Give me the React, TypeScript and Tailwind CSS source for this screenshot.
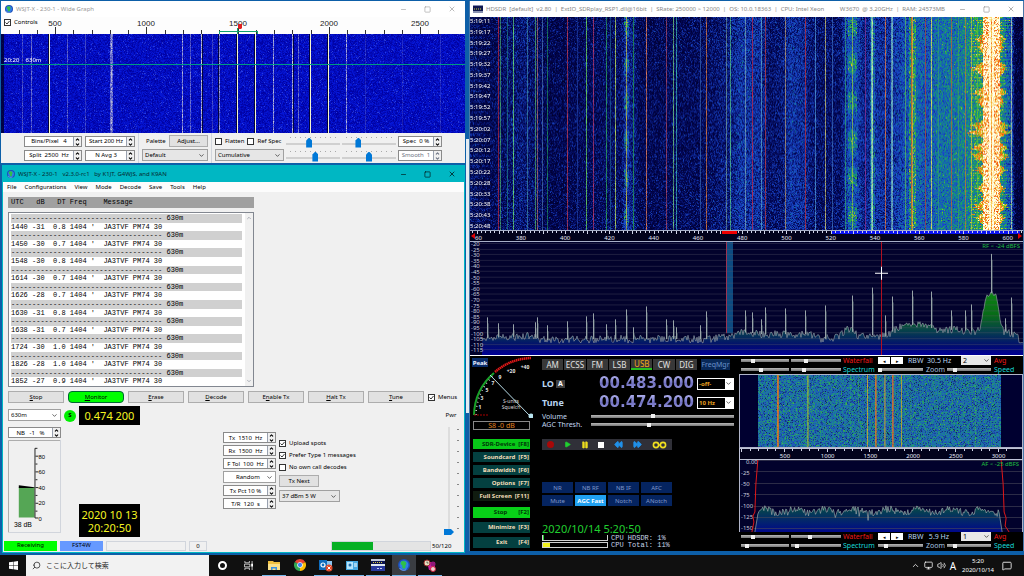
import { useEffect, useRef, type ReactNode } from 'react'
import { ChevronDown, ChevronUp, Minus, Square, X, Search, MessageSquare, Volume2, Monitor, Play, Pause, Rewind, FastForward } from 'lucide-react'

type RGB = [number, number, number]

function makeRandom(seed: number) {
  let s = seed
  return () => {
    s = (s + 0x6d2b79f5) | 0
    let t = Math.imul(s ^ (s >>> 15), 1 | s)
    t = (t + Math.imul(t ^ (t >>> 7), 61 | t)) ^ t
    return ((t ^ (t >>> 14)) >>> 0) / 4294967296
  }
}

// linear interpolation over a list of [x, y] nodes
function lerpNodes(nodes: number[][], x: number) {
  for (let i = 1; i < nodes.length; i++) {
    if (x <= nodes[i][0]) {
      const [x0, y0] = nodes[i - 1]
      const [x1, y1] = nodes[i]
      return y0 + ((y1 - y0) * (x - x0)) / (x1 - x0)
    }
  }
  return nodes[nodes.length - 1][1]
}

const mix = (a: RGB, b: RGB, t: number): RGB => [a[0] + (b[0] - a[0]) * t, a[1] + (b[1] - a[1]) * t, a[2] + (b[2] - a[2]) * t]

const PALETTE: { at: number; c: RGB }[] = [
  { at: 0, c: [0, 0, 44] },
  { at: 0.15, c: [2, 6, 84] },
  { at: 0.35, c: [26, 72, 205] },
  { at: 0.5, c: [18, 138, 140] },
  { at: 0.62, c: [50, 185, 50] },
  { at: 0.75, c: [235, 205, 30] },
  { at: 0.86, c: [240, 70, 10] },
  { at: 0.93, c: [250, 200, 70] },
  { at: 1, c: [255, 255, 235] },
]

function heat(v: number): RGB {
  const t = Math.max(0, Math.min(1, v))
  for (let i = 1; i < PALETTE.length; i++) {
    if (t <= PALETTE[i].at) {
      const a = PALETTE[i - 1]
      const b = PALETTE[i]
      return mix(a.c, b.c, (t - a.at) / (b.at - a.at))
    }
  }
  return PALETTE[PALETTE.length - 1].c
}

function Waterfall({ width, height, seed, pixel, label }: {
  width: number
  height: number
  seed: number
  pixel: (x: number, y: number, rnd: () => number) => RGB
  label: string
}) {
  const ref = useRef<HTMLCanvasElement>(null)

  useEffect(() => {
    const ctx = ref.current?.getContext('2d')
    if (!ctx) return
    const rnd = makeRandom(seed)
    const img = ctx.createImageData(width, height)
    for (let y = 0; y < height; y++) {
      for (let x = 0; x < width; x++) {
        const c = pixel(x, y, rnd)
        const i = (y * width + x) * 4
        img.data[i] = c[0]
        img.data[i + 1] = c[1]
        img.data[i + 2] = c[2]
        img.data[i + 3] = 255
      }
    }
    ctx.putImageData(img, 0, 0)
  }, [width, height, seed, pixel])

  return <canvas ref={ref} width={width} height={height} role="img" aria-label={label} className="block h-full w-full" />
}

// ---- Wide graph ----

const WIDE_LINES: Record<number, number> = {
  21: 0.3, 30: 0.4, 48: 1, 66: 0.35, 84: 0.25, 109: 0.45, 110: 0.65, 111: 0.45, 181: 0.65, 189: 0.4, 200: 0.75,
  211: 0.25, 218: 0.6, 236: 1, 254: 1, 272: 0.65, 291: 0.75, 297: 0.4, 309: 1, 327: 1, 345: 0.65, 364: 0.15, 401: 0.12, 439: 0.14,
}

function widePixel(x: number, y: number, rnd: () => number): RGB {
  const n = rnd()
  let c: RGB = mix([0, 0, 160], [6, 24, 218], n)
  if (rnd() > 0.96) c = mix(c, [90, 120, 250], 0.4)
  if (x < 3) c = mix(c, [0, 0, 40], 0.8)
  const k = WIDE_LINES[x] ?? 0
  if (k === 1) return [245, 245, 205]
  if (k > 0) return mix(c, [205, 205, 220], Math.min(1, k * (0.5 + rnd())))
  if (WIDE_LINES[x + 1] === 1 || WIDE_LINES[x + 1] === 0.6 || WIDE_LINES[x - 1] === 0.75) return mix(c, [0, 0, 20], 0.75)
  return c
}

// ---- HDSDR waterfall ----

const BAND_LEVEL = [
  [0, 0.2], [20, 0.13], [50, 0.2], [80, 0.12], [150, 0.16], [156, 0.25], [164, 0.2], [170, 0.13], [235, 0.15], [262, 0.22], [270, 0.28],
  [290, 0.26], [298, 0.17], [312, 0.19], [320, 0.28], [332, 0.25], [345, 0.17], [370, 0.17], [378, 0.33], [386, 0.32], [394, 0.21],
  [404, 0.28], [418, 0.25], [434, 0.34], [446, 0.4], [456, 0.36], [466, 0.42], [490, 0.45], [508, 0.5], [530, 0.5], [536, 0.38],
  [542, 0.28], [545, 0.08], [553, 0.06],
]

const BAND_LINES: Record<number, RGB> = {
  28: [185, 40, 60], 30: [70, 170, 110], 37: [30, 120, 130], 43: [110, 235, 120], 57: [60, 130, 160], 65: [80, 170, 100],
  67: [170, 110, 110], 72: [70, 110, 170], 77: [30, 140, 90], 97: [200, 60, 80], 107: [30, 60, 160], 116: [110, 220, 90],
  123: [190, 60, 110], 136: [50, 170, 90], 140: [30, 90, 140], 145: [190, 225, 90], 156: [200, 190, 60], 163: [40, 160, 80],
  176: [240, 130, 90], 196: [170, 70, 100], 203: [120, 210, 130], 206: [60, 180, 180], 230: [50, 90, 170], 236: [220, 120, 60],
  256: [110, 150, 150], 260: [80, 190, 140], 275: [120, 160, 180], 282: [200, 40, 70], 291: [90, 160, 200], 295: [185, 60, 70],
  315: [180, 150, 110], 335: [200, 50, 60], 345: [80, 150, 210], 355: [205, 195, 110], 362: [60, 110, 190], 375: [50, 160, 110],
  382: [150, 200, 60], 395: [140, 50, 150], 401: [130, 225, 190], 402: [200, 245, 160], 415: [235, 120, 60], 421: [110, 190, 200],
  422: [130, 200, 190], 435: [90, 180, 90], 441: [215, 90, 30], 442: [240, 180, 40], 455: [170, 70, 60], 461: [225, 225, 90],
  468: [50, 150, 120], 481: [190, 100, 50], 488: [60, 160, 90], 495: [190, 120, 50], 501: [200, 200, 60], 507: [90, 190, 60],
  541: [190, 205, 170],
}

const BURSTS = [[22, 0.7], [30, 0.5], [50, 0.9], [54, 0.5], [75, 0.8], [84, 0.6], [108, 1], [114, 1.2], [130, 0.9], [138, 1], [152, 0.7], [170, 0.5], [188, 0.9], [200, 0.6]]

function bandPixel(x: number, y: number, rnd: () => number): RGB {
  let v = lerpNodes(BAND_LEVEL, x) + (rnd() + rnd() - 1) * 0.17
  if (rnd() > 0.93) v += 0.1

  // fading carriers with ragged edges
  const fade = 1 + Math.sin(y / 6)
  if (Math.abs(x - 382) < 5) v += rnd() * 0.16 * fade
  if (Math.abs(x - 156) < 3) v += rnd() * 0.16 * fade
  if (Math.abs(x - 442) < 4) v += rnd() * 0.26
  if (Math.abs(x - 402) < 3) v += rnd() * 0.22

  // strong local station with ragged wings on both sides
  const d = Math.abs(x - 521)
  const rowNoise = (Math.imul(y + 3, 2654435761) >>> 20) / 4096
  let burst = 0
  for (const [by, power] of BURSTS) burst = Math.max(burst, power * Math.max(0, 1 - Math.abs(y - by) / 6))
  const reach = 8 + burst * (x < 521 ? 14 : 11) * (0.6 + rowNoise * 0.6)
  if (d < 3) v = 0.95 + rnd() * 0.1 - (x === 521 ? 0.08 : 0)
  else if (d < 9) v = 0.86 + rnd() * 0.24 - (rowNoise > 0.8 ? 0.06 : 0)
  else if (d < reach) v += 0.18 + rnd() * 0.26
  else if (d < 22 && rowNoise > 0.6) v += rnd() * 0.22
  if (v > 0.84) return heat(v)

  const line = BAND_LINES[x]
  if (line && d > 9) return mix(heat(v), line, 0.5 + rnd() * 0.45)
  return heat(v)
}

// ---- AF waterfall ----

const AF_LINES: Record<number, [RGB, number]> = {
  37: [[225, 125, 35], 1], 38: [[215, 110, 40], 1], 67: [[140, 180, 70], 0.9], 68: [[150, 170, 60], 0.7], 127: [[200, 165, 50], 1],
  135: [[215, 120, 45], 1], 136: [[190, 120, 50], 0.8], 144: [[150, 145, 80], 1], 145: [[130, 135, 100], 0.9], 152: [[215, 110, 50], 1],
  153: [[190, 110, 60], 0.8], 161: [[190, 165, 50], 1], 118: [[80, 180, 80], 0.4], 170: [[60, 170, 80], 0.4], 110: [[50, 170, 110], 0.4],
  235: [[80, 190, 90], 0.4],
}

function afPixel(x: number, y: number, rnd: () => number): RGB {
  if (x < 18 || x > 260) return [0, 0, 48]
  const c = heat(0.42 + (rnd() + rnd() - 1) * 0.24 - (rnd() > 0.88 ? 0.15 : 0))
  const line = AF_LINES[x]
  return line ? mix(c, line[0], line[1] * (0.7 + rnd() * 0.3)) : mix(c, [45, 130, 150], 0.3)
}

// ---- Spectrum traces ----

const RF_FLOOR = [
  [0, 99], [12, 97], [60, 95], [75, 99], [110, 98], [240, 98], [258, 95], [276, 91], [290, 93], [340, 93], [350, 98], [368, 96],
  [378, 88], [390, 96], [400, 94], [415, 95], [432, 84], [438, 86], [445, 82], [465, 88], [490, 89], [505, 90], [510, 88],
  [513, 70], [517, 53], [519, 55], [522, 50], [524, 53], [526, 53], [528, 64], [531, 84], [534, 90], [545, 95], [553, 101],
]
const RF_PEAKS = [
  [17, 76], [28, 82], [43, 83], [65, 81], [67, 76], [77, 84], [97, 80], [116, 75], [123, 72], [136, 83], [145, 78], [156, 68],
  [163, 86], [176, 65], [196, 78], [203, 79], [206, 86], [230, 84], [236, 70], [275, 69], [282, 71], [291, 78], [295, 66],
  [315, 67], [335, 69], [355, 64], [382, 54], [402, 46], [415, 74], [422, 55], [442, 49], [461, 50], [481, 69], [495, 69],
  [501, 63], [521, 12], [535, 77], [541, 56],
]

function rfTrace() {
  const rnd = makeRandom(11)
  const pts: string[] = []
  for (let x = 12; x <= 553; x++) {
    const amp = x > 510 && x < 532 ? 3 : 8
    pts.push(`${x},${(lerpNodes(RF_FLOOR, x) + (rnd() - 0.5) * amp).toFixed(1)}`)
  }
  return pts.join(' ')
}

function afTrace() {
  const rnd = makeRandom(5)
  const pts: string[] = ['15,72', '18,54']
  for (let x = 19; x <= 261; x += 1) {
    const dip = rnd() > 0.97 ? 8 : 0
    pts.push(`${x},${(51 + Math.sin(x / 5) * 2 + (rnd() - 0.5) * 7 + dip).toFixed(1)}`)
  }
  pts.push('264,72')
  return pts.join(' ')
}

const RF_TRACE = rfTrace()
const AF_TRACE = afTrace()

// ---- Shared controls ----

function Spin({ value, label, className = '', disabled = false }: { value: string; label: string; className?: string; disabled?: boolean }) {
  return (
    <div className={`flex h-[11px] items-stretch border border-[#8a8a8a] bg-white ${disabled ? 'text-gray-500' : 'text-black'} ${className}`}>
      <input aria-label={label} defaultValue={value} disabled={disabled} className="w-full min-w-0 flex-1 bg-transparent text-center leading-none outline-none" />
      <span className="flex w-2 shrink-0 flex-col border-l border-gray-400 bg-[#f0f0f0]">
        <button aria-label={`${label} up`} className="flex flex-1 items-center justify-center"><ChevronUp size={5} strokeWidth={5} /></button>
        <button aria-label={`${label} down`} className="flex flex-1 items-center justify-center"><ChevronDown size={5} strokeWidth={5} /></button>
      </span>
    </div>
  )
}

function Select({ value, label, className = '' }: { value: string; label: string; className?: string }) {
  return (
    <div className={`relative flex h-3 shrink-0 border border-[#a0a0a0] ${className}`}>
      <select aria-label={label} className="h-full w-full appearance-none bg-transparent px-0.5 leading-none outline-none">
        <option>{value}</option>
      </select>
      <ChevronDown size={7} className="pointer-events-none absolute top-0.5 right-0.5" />
    </div>
  )
}

function Check({ label, checked = false }: { label: string; checked?: boolean }) {
  return (
    <label className="flex items-center gap-[3px] whitespace-nowrap">
      <span className="relative flex size-[7px] shrink-0">
        <input type="checkbox" defaultChecked={checked} className="peer size-[7px] appearance-none border border-[#333] bg-white" />
        <svg viewBox="0 0 7 7" className="pointer-events-none absolute inset-0 hidden size-[7px] peer-checked:block">
          <path d="M1.5 3.5L3 5L5.5 2" fill="none" stroke="#222" strokeWidth="0.9" />
        </svg>
      </span>
      {label}
    </label>
  )
}

function TickSlider({ value, label }: { value: number; label: string }) {
  return (
    <div className="relative h-[13px] w-[54px]">
      <div className="absolute inset-x-1 top-0.5 h-px bg-[repeating-linear-gradient(90deg,#aaa_0_1px,transparent_1px_5px)]" />
      <input
        type="range"
        aria-label={label}
        defaultValue={value}
        className="block h-[13px] w-full appearance-none bg-[linear-gradient(#d0d0d0,#d0d0d0)] bg-[length:100%_2px] bg-[position:0_8px] bg-no-repeat [&::-webkit-slider-thumb]:mt-[3px] [&::-webkit-slider-thumb]:h-[10px] [&::-webkit-slider-thumb]:w-[6px] [&::-webkit-slider-thumb]:appearance-none [&::-webkit-slider-thumb]:bg-[#0078d7] [&::-webkit-slider-thumb]:[clip-path:polygon(50%_0,100%_30%,100%_100%,0_100%,0_30%)]"
      />
    </div>
  )
}

function DarkSlider({ value, label, className = '' }: { value: number; label: string; className?: string }) {
  return (
    <input
      type="range"
      aria-label={label}
      defaultValue={value}
      className={`block h-[5px] min-w-0 appearance-none bg-[linear-gradient(#b8b8b8,#777)] bg-[length:100%_3px] bg-center bg-no-repeat [&::-webkit-slider-thumb]:h-[4px] [&::-webkit-slider-thumb]:w-[4px] [&::-webkit-slider-thumb]:appearance-none [&::-webkit-slider-thumb]:bg-[#f0f0f0] ${className}`}
    />
  )
}

function WindowButtons({ className = '' }: { className?: string }) {
  return (
    <div className={`flex shrink-0 items-center gap-[17px] ${className}`}>
      <button aria-label="Minimize"><Minus size={7} strokeWidth={2} /></button>
      <button aria-label="Maximize"><Square size={7} strokeWidth={2} /></button>
      <button aria-label="Close"><X size={8} strokeWidth={2} /></button>
    </div>
  )
}

function Globe({ className = '' }: { className?: string }) {
  return (
    <svg viewBox="0 0 16 16" className={className}>
      <circle cx="8" cy="8" r="8" fill="#1d4fb8" />
      <circle cx="8" cy="8" r="6" fill="#2f7de8" />
      <path d="M5 3c3-1 5 0 6 2s-2 3-1 5-3 4-4 2 1-3-1-4-2-4 0-5z" fill="#2fc04a" />
      <path d="M2 12c2 3 6 4 9 2" stroke="#9ac8ff" fill="none" />
    </svg>
  )
}

function Underlined({ text, at }: { text: string; at: number }) {
  return <>{text.slice(0, at)}<u>{text[at]}</u>{text.slice(at + 1)}</>
}

// ---- WSJT-X wide graph window ----

function WideGraph() {
  const ticks = Array.from({ length: 25 }, (_, i) => 200 + i * 100)
  const xOf = (hz: number) => Math.round(54 + (hz - 500) * 0.1825)
  return (
    <section className="ml-px flex shrink-0 flex-col bg-[#f0f0f0]">
      <header className="flex h-4 items-center bg-white pr-[9px] pl-1 text-[#999]">
        <Globe className="mr-[3px] size-2" />
        <h2 className="flex-1">WSJT-X - 230-1 - Wide Graph</h2>
        <WindowButtons className="text-[#999]" />
      </header>
      <div className="relative h-[17px] bg-[#fdfdfd]">
        <svg viewBox="0 0 464 17" preserveAspectRatio="none" className="h-full w-full">
          {ticks.map(hz => (
            <rect key={hz} x={xOf(hz)} y={hz % 500 === 0 ? 10 : 13} width="1" height={hz % 500 === 0 ? 7 : 4} fill="#333" />
          ))}
          {[500, 1000, 1500, 2000, 2500].map(hz => (
            <text key={hz} x={xOf(hz)} y="9" textAnchor="middle" fontSize="8" fontFamily="Liberation Sans, sans-serif" fill="#222">{hz}</text>
          ))}
          <path d="M218 14h38v1h-38zM218 14h1v3h-1zM256 14h1v3h-1zM236 11h1v6h-1z" fill="#10a070" />
          <path d="M237 7h4v4l-1 1h-2l-1-1z" fill="#e02020" />
        </svg>
        <div className="absolute top-px left-[3px]"><Check label="Controls" checked /></div>
      </div>
      <div className="relative h-[99px]">
        <Waterfall width={464} height={99} seed={3} pixel={widePixel} label="Wide graph waterfall" />
        <div className="absolute inset-x-0 top-[30px] h-px bg-[#009a80]" />
        <span className="absolute top-[22px] left-[3px] whitespace-pre text-white">20:20    630m</span>
      </div>
      <div className="flex h-[30px] items-center pl-[23px]">
        <div className="grid grid-cols-[58px_50px] gap-x-[3px] gap-y-[3px]">
          <Spin value="Bins/Pixel   4" label="Bins per pixel" />
          <Spin value="Start 200 Hz" label="Start frequency" />
          <Spin value="Split  2500  Hz" label="Split frequency" />
          <Spin value="N Avg 3" label="Averages" />
        </div>
        <div className="mx-[3px] h-full w-px bg-gray-300" />
        <div className="flex w-[66px] flex-col gap-0.5">
          <div className="flex items-center justify-between pl-1">
            <span>Palette</span>
            <button className="h-3 w-[39px] border border-[#adadad] bg-[#e1e1e1] leading-none">Adjust...</button>
          </div>
          <Select value="Default" label="Palette" className="bg-[#e6e6e6]" />
        </div>
        <div className="mx-[3px] h-full w-px bg-gray-300" />
        <div className="flex w-[69px] flex-col gap-0.5">
          <div className="flex h-3 items-center gap-[3px]"><Check label="Flatten" /><Check label="Ref Spec" /></div>
          <Select value="Cumulative" label="Spectrum mode" className="bg-[#e6e6e6]" />
        </div>
        <div className="ml-0.5 grid grid-cols-[54px_54px] gap-x-0.5 gap-y-px">
          <TickSlider value={42} label="Gain" />
          <TickSlider value={28} label="Spectrum gain" />
          <TickSlider value={55} label="Zero" />
          <TickSlider value={50} label="Spectrum zero" />
        </div>
        <div className="ml-0.5 flex w-11 flex-col gap-[3px]">
          <Spin value="Spec  0 %" label="Spectrum share" />
          <Spin value="Smooth  1" label="Smoothing" disabled />
        </div>
      </div>
    </section>
  )
}

// ---- WSJT-X main window ----

const DECODES = [
  ['1440', '-31', '0.8'], ['1450', '-30', '0.7'], ['1548', '-30', '0.8'], ['1614', '-30', '0.7'], ['1626', '-28', '0.7'],
  ['1630', '-31', '0.8'], ['1638', '-31', '0.7'], ['1724', '-30', '1.0'], ['1826', '-28', '1.0'], ['1852', '-27', '0.9'],
]

const ACTIONS: [string, number][] = [['Stop', 0], ['Monitor', 0], ['Erase', 0], ['Decode', 0], ['Enable Tx', 1], ['Halt Tx', 0], ['Tune', 0]]

function LevelMeter() {
  return (
    <svg viewBox="0 0 53 94" className="w-full border-r border-b border-gray-300 bg-[#f0f0f0]">
      <path d="M0.500 94V0.500H53" fill="none" stroke="#aaa" />
      <rect x="11" y="48" width="16" height="31" fill="#55a655" />
      <path d="M11 46l14 2l3 1h-17z" fill="#000" />
      <path d="M30 8.500h-2.500V79.500H31M28 16.500h3M28 24.500h2M28 32.500h3M28 40.500h2M28 48.500h3M28 56.500h2M28 64.500h3M28 72.500h2" fill="none" stroke="#222" />
      {[80, 60, 40, 20, 0].map((n, i) => (
        <text key={n} x="31" y={19 + i * 15.8} fontSize="6" fontFamily="Liberation Sans, sans-serif">{n}</text>
      ))}
      <text x="6" y="89" fontSize="7" fontFamily="Liberation Sans, sans-serif">38 dB</text>
    </svg>
  )
}

function MainWindow() {
  return (
    <section className="ml-0.5 flex min-h-0 flex-1 flex-col border border-[#00b7c3] bg-[#f0f0f0]">
      <header className="flex h-4 shrink-0 items-center bg-[#00b7c3] pr-2 pl-1 text-[#062a30]">
        <Globe className="mr-[3px] size-2" />
        <h1 className="flex-1 whitespace-pre">WSJT-X - 230-1   v2.3.0-rc1   by K1JT, G4WJS, and K9AN</h1>
        <WindowButtons className="text-black" />
      </header>
      <nav className="flex h-[10px] items-center gap-2 bg-[#fcfcfc] pl-1">
        {['File', 'Configurations', 'View', 'Mode', 'Decode', 'Save', 'Tools', 'Help'].map(m => <button key={m} className="leading-none">{m}</button>)}
      </nav>

      <div className="flex min-h-0 flex-1 flex-col px-[5px] pt-[5px]">
        <div className="flex h-[11px] w-[246px] items-center bg-[#a0a0a0] pl-[3px] font-['Liberation_Mono',monospace] text-[7px] whitespace-pre">
          {'UTC   dB   DT Freq    Message'}
        </div>
        <div className="mt-1 flex h-[175px] w-[246px] shrink-0 border border-[#828790] bg-white">
          <div className="flex flex-1 flex-col overflow-hidden pt-px pl-0.5 font-['Liberation_Mono',monospace] text-[7px] leading-[8px] whitespace-pre">
            {DECODES.map(([utc, db, dt]) => (
              <div key={utc} className="flex flex-1 flex-col">
                <div className="flex-1 bg-[#d0d0d0]">{'-'.repeat(36)} 630m</div>
                <div className="flex-1">{`${utc} ${db}  ${dt} 1404 '  JA3TVF PM74 30`}</div>
              </div>
            ))}
          </div>
          <div className="ml-[3px] flex w-2 flex-col items-center justify-between bg-[#f0f0f0] py-0.5 text-gray-500">
            <ChevronUp size={6} />
            <ChevronDown size={6} />
          </div>
        </div>

        <div className="mt-1 flex h-3 items-center gap-1">
          {ACTIONS.map(([text, at]) => (
            <button
              key={text}
              className={`h-3 w-14 border leading-none ${text === 'Monitor' ? 'rounded-sm border-[#063] bg-[#00ff00]' : 'border-[#adadad] bg-[#e1e1e1]'}`}
            >
              <Underlined text={text} at={at} />
            </button>
          ))}
          <Check label="Menus" checked />
        </div>

        <div className="flex min-h-0 flex-1 pt-[3px]">
          <div className="flex w-[53px] flex-col">
            <Select value="630m" label="Band" className="mt-[3px] bg-white" />
            <Spin value="NB   -1   %" label="Noise blanker" className="mt-[6px]" />
            <div className="mt-[2px]"><LevelMeter /></div>
          </div>

          <div className="ml-1 flex w-[75px] flex-col items-end justify-between pb-[4px]">
            <div className="flex items-center gap-[3px]">
              <span className="flex size-3 items-center justify-center rounded-full bg-[#00f000] font-bold">S</span>
              <div className="flex h-[19px] w-[61px] items-center justify-center bg-black text-[11px] text-[#f5f520]">0.474 200</div>
            </div>
            <div className="flex h-[33px] w-[61px] flex-col justify-center bg-black text-center text-[11px] leading-[13px] whitespace-nowrap text-[#f5f520]">
              <span>2020 10 13</span>
              <span>20:20:50</span>
            </div>
          </div>

          <div className="ml-[83px] flex w-[53px] flex-col gap-0.5 pt-[26px]">
            <Spin value="Tx  1510  Hz" label="Tx frequency" />
            <Spin value="Rx  1500  Hz" label="Rx frequency" />
            <Spin value="F Tol  100  Hz" label="Frequency tolerance" />
            <div className="flex flex-col">
              <Select value="Random" label="Sequence" className="bg-white [&>select]:pl-3" />
            </div>
            <Spin value="Tx Pct 10 %" label="Tx percent" />
            <Spin value="T/R  120  s" label="Period" />
          </div>

          <div className="ml-[3px] flex w-[61px] flex-col gap-[3px] pt-[33px]">
            <Check label="Upload spots" checked />
            <Check label="Prefer Type 1 messages" checked />
            <Check label="No own call decodes" />
            <button className="h-3 w-10 shrink-0 border border-[#adadad] bg-[#e1e1e1] leading-none">Tx Next</button>
            <Select value="37 dBm  5 W" label="Power" className="bg-[#e6e6e6]" />
          </div>

          <div className="ml-auto flex w-4 flex-col items-center pt-[5px]">
            <span className="leading-[8px]">Pwr</span>
            <div className="relative mt-2 h-[108px] w-4">
              <div className="absolute top-0.5 right-0 bottom-0.5 w-0.5 bg-[repeating-linear-gradient(#888_0_1px,transparent_1px_11px)]" />
              <input
                type="range"
                aria-label="Pwr"
                defaultValue={0}
                className="absolute inset-0 h-full w-3 appearance-none bg-[linear-gradient(#ddd,#ddd)] bg-[length:2px_100%] bg-center bg-no-repeat [direction:rtl] [writing-mode:vertical-lr] [&::-webkit-slider-thumb]:h-[6px] [&::-webkit-slider-thumb]:w-[10px] [&::-webkit-slider-thumb]:appearance-none [&::-webkit-slider-thumb]:bg-[#0078d7] [&::-webkit-slider-thumb]:[clip-path:polygon(0_0,70%_0,100%_50%,70%_100%,0_100%)]"
              />
            </div>
          </div>
        </div>
      </div>

      <footer className="flex h-[11px] shrink-0 items-start pr-1 pl-px">
        <span className="h-[10px] w-[53px] bg-[#00ff00] text-center leading-[9px]">Receiving</span>
        <span className="ml-[3px] h-[10px] w-[43px] bg-[#6699ff] text-center leading-[9px]">FST4W</span>
        <span className="ml-[3px] h-[10px] w-20 border border-gray-300" />
        <span className="ml-[3px] h-[10px] w-[18px] border border-gray-300 text-center leading-[9px]">0</span>
        <div role="progressbar" aria-label="Period progress" aria-valuenow={50} aria-valuemax={120} className="ml-auto h-[10px] w-[100px] border border-gray-300 bg-[#e4e4e4]">
          <div className="h-full bg-[#06b025]" style={{ width: `${(50 / 120) * 100}%` }} />
        </div>
        <span className="ml-px w-[28px] leading-[10px]">50/120</span>
      </footer>
    </section>
  )
}

// ---- HDSDR window ----

const STAMPS = ['19:11', '19:17', '19:22', '19:27', '19:32', '19:37', '19:42', '19:47', '19:52', '19:57', '20:02', '20:07', '20:12', '20:17', '20:22', '20:28', '20:33', '20:38', '20:43', '20:48']

function RfScale() {
  const minor = Array.from({ length: 125 }, (_, i) => 358 + i * 2)
  return (
    <svg viewBox="0 0 553 12" preserveAspectRatio="none" className="block h-full w-full">
      <rect width="553" height="12" fill="#02021c" />
      <rect y="0" width="553" height="1" fill="#a8b0c8" />
      <rect y="11" width="553" height="1" fill="#a8b0c8" />
      <rect x="362" y="1" width="188" height="3" fill="#0a12f0" />
      {minor.map(k => (
        <rect key={k} x={Math.round((k - 357) * 2.213)} y="1" width="1" height={k % 10 === 0 ? 3 : 2} fill="#d0d4e8" />
      ))}
      <rect x="252" y="1" width="15" height="3" fill="#f00000" />
      <path d="M5 3v6L1 6z" fill="#e00000" />
      <path d="M548 3v6l4-3z" fill="#e00000" />
      {[380, 400, 420, 440, 460, 480, 500, 520, 540, 560, 580, 600].map(k => (
        <text key={k} x={(k - 357) * 2.213} y="10" textAnchor="middle" fontSize="6" fontFamily="Noto Sans, sans-serif" fill="#e8e8f8">{k}</text>
      ))}
      <text x="5" y="10" fontSize="6" fontFamily="Noto Sans, sans-serif" fill="#e8e8f8">60</text>
    </svg>
  )
}

function RfSpectrum() {
  const levels = Array.from({ length: 20 }, (_, i) => 20 + i * 5)
  return (
    <svg viewBox="0 0 553 114" preserveAspectRatio="none" className="block h-full w-full">
      <defs>
        <linearGradient id="rf" x1="0" y1="0" x2="0" y2="114" gradientUnits="userSpaceOnUse">
          <stop offset="0.45" stopColor="#0a8412" />
          <stop offset="0.65" stopColor="#086a18" />
          <stop offset="0.8" stopColor="#063c50" />
          <stop offset="0.92" stopColor="#020c70" />
          <stop offset="1" stopColor="#000096" />
        </linearGradient>
      </defs>
      <rect width="553" height="114" fill="#02022c" />
      <rect x="257" width="6" height="92" fill="#0d4a80" />
      <rect x="256" width="1" height="92" fill="#a03050" />
      <polygon points={`12,114 ${RF_TRACE} 553,114`} fill="url(#rf)" />
      {levels.map((l, i) => (
        <g key={l}>
          <rect x="10" y={Math.round(i * 5.65) + 1} width="543" height="1" fill="#5a5a6a" opacity="0.35" />
          <text x="1" y={i * 5.65 + 4} fontSize="6" fontFamily="Noto Sans, sans-serif" fill="#c8ccdc">-{l}</text>
        </g>
      ))}
      <polyline points={RF_TRACE} fill="none" stroke="#a0aab0" strokeWidth="0.600" />
      {RF_PEAKS.map(([x, y]) => (
        <g key={x}>
          <rect x={x} y={y} width="1" height={Math.max(0, lerpNodes(RF_FLOOR, x) - y)} fill="#98a4a8" />
          <rect x={x + 1} y={y + 6} width="1" height={Math.max(0, lerpNodes(RF_FLOOR, x) - y - 6)} fill="#50606c" opacity="0.600" />
        </g>
      ))}
      <rect x="411" width="1" height="114" fill="#b01020" />
      <path d="M405 31h13v1h-13zM411 25h1v13h-1z" fill="#fff" />
      <text x="550" y="6" textAnchor="end" fontSize="6" fontFamily="Noto Sans, sans-serif" fill="#20c040">RF &lt; -24 dBFS</text>
    </svg>
  )
}

function SMeter() {
  const marks: [string, number, number][] = [['1', 10, 51], ['3', 12, 42], ['5', 17, 34], ['7', 23, 27], ['9', 30, 21], ['+20', 41, 15], ['+40', 55, 11]]
  return (
    <svg viewBox="0 0 63 62" className="h-[62px] w-[63px]">
      <path d="M4 59A57 57 0 0 1 24 17" fill="none" stroke="#18a028" strokeWidth="2" />
      <path d="M25 16A57 57 0 0 1 61 2" fill="none" stroke="#e01818" strokeWidth="2.500" strokeDasharray="1.500 0.500" />
      <path d="M6 59A55 55 0 0 1 24 19" fill="none" stroke="#fff" strokeWidth="1.500" strokeDasharray="0.700 3.500" />
      <path d="M4 59h14" stroke="#a00" strokeDasharray="2 1" />
      <rect x="2" y="2" width="16" height="9" fill="#082a68" />
      <text x="10" y="9" textAnchor="middle" fontSize="6" fontWeight="700" fontFamily="Noto Sans, sans-serif" fill="#f0f4ff">Peak</text>
      {marks.map(([t, x, y]) => (
        <text key={t} x={x} y={y + 2} textAnchor="middle" fontSize="5" fontWeight="700" fontFamily="Noto Sans, sans-serif" fill="#e8e8e8">{t}</text>
      ))}
      <text x="41" y="47" textAnchor="middle" fontSize="5" fontFamily="Noto Sans, sans-serif" fill="#ddd">S-units</text>
      <text x="41" y="53" textAnchor="middle" fontSize="5" fontFamily="Noto Sans, sans-serif" fill="#ddd">Squelch</text>
      <path d="M20 19L60 60" stroke="#b8dce8" />
      <circle cx="61" cy="60" r="2.500" fill="#b8e4f0" />
    </svg>
  )
}

const SIDE_BUTTONS: [string, string, string][] = [
  ['SDR-Device', '[F8]', 'bg-[#08c818] text-[#003808]'],
  ['Soundcard', '[F5]', 'bg-[#044040] text-[#f0dcb8]'],
  ['Bandwidth', '[F6]', 'bg-[#044040] text-[#f0dcb8]'],
  ['Options', '[F7]', 'bg-[#044040] text-[#f0dcb8]'],
  ['Full Screen', '[F11]', 'bg-[#101c10] text-[#f0dcb8]'],
]
const SIDE_BUTTONS_2: [string, string, string][] = [
  ['Stop', '[F2]', 'bg-[#08d018] text-[#003808]'],
  ['Minimize', '[F3]', 'bg-[#044040] text-[#f0dcb8]'],
  ['Exit', '[F4]', 'bg-[#044040] text-[#f0dcb8]'],
]

function SidePanel() {
  return (
    <div className="flex w-[63px] shrink-0 flex-col">
      <SMeter />
      <div className="mt-[3px] ml-[3px] h-[9px] w-[57px] border border-[#888] text-center text-[7px] leading-[7px] text-[#e08020]">S8 -0 dB</div>
      <div className="mt-[9px] ml-[3px] flex w-[57px] flex-col gap-[3px] font-bold">
        {SIDE_BUTTONS.map(([name, key, tone]) => (
          <button key={name} className={`flex h-[10px] items-center justify-end gap-[3px] pr-px ${tone}`}><span>{name}</span><span>{key}</span></button>
        ))}
      </div>
      <div className="mt-[6px] ml-[3px] flex w-[57px] flex-col gap-[4px] font-bold">
        {SIDE_BUTTONS_2.map(([name, key, tone]) => (
          <button key={name} className={`flex h-[11px] items-center justify-end gap-[3px] pr-px ${tone}`}>
            <span className={name === 'Minimize' ? '' : 'pr-2'}>{name}</span><span>{key}</span>
          </button>
        ))}
      </div>
    </div>
  )
}

function FreqRow({ label, value, step, badge }: { label: string; value: string; step: string; badge?: ReactNode }) {
  return (
    <div className="flex h-[19px] items-center">
      <span className="flex w-12 shrink-0 items-center gap-0.5 text-[9px] font-bold text-[#b8d4f0]">{label}{badge}</span>
      <span className="flex-1 bg-gradient-to-b from-[#c0c0f8] via-[#7070c0] to-[#b0b0f0] bg-clip-text text-right font-['DejaVu_Sans',sans-serif] text-[15px] leading-[19px] font-bold text-transparent">{value}</span>
      <div className="relative ml-[3px] flex h-3 w-[37px] border border-white bg-black">
        <select aria-label={`${label} step`} className="w-full appearance-none pl-px leading-none font-bold text-[#e8a020] outline-none">
          <option>{step}</option>
        </select>
        <span className="pointer-events-none absolute inset-y-0 right-0 flex w-2 items-center bg-white text-black"><ChevronDown size={7} /></span>
      </div>
    </div>
  )
}

function TunerPanel() {
  return (
    <div className="flex w-[197px] shrink-0 flex-col pt-[3px] pl-[9px]">
      <div className="flex h-[11px] gap-px text-[8px] text-[#e0e0e0]">
        {['AM', 'ECSS', 'FM', 'LSB', 'USB', 'CW', 'DIG'].map(m => (
          <button key={m} className={`w-[22px] leading-[10px] ${m === 'USB' ? 'border-b-2 border-[#28c020] bg-[#383838] text-[#f0a818]' : 'bg-[#383838]'}`}>{m}</button>
        ))}
        <button className="ml-[3px] w-[30px] bg-[#082858] text-[7px] leading-[10px] text-[#6890c8]">FreqMgr</button>
      </div>
      <div className="mt-1 flex w-[192px] flex-col">
        <FreqRow label="LO" value="00.483.000" step="-off-" badge={<span className="bg-[#404040] px-0.5 text-[7px] leading-[8px] text-white">A</span>} />
        <FreqRow label="Tune" value="00.474.200" step="10 Hz" />
        <label className="flex h-2 items-center text-[7px] text-[#c0d8f0]"><span className="w-[49px] shrink-0">Volume</span><DarkSlider value={43} label="Volume" className="flex-1" /></label>
        <label className="flex h-[9px] items-center text-[7px] whitespace-nowrap text-[#c0d8f0]"><span className="w-[49px] shrink-0">AGC Thresh.</span><DarkSlider value={40} label="AGC threshold" className="flex-1" /></label>
      </div>
      <div className="mt-[10px] flex h-[11px] w-[130px] items-center justify-around bg-[#303038]">
        <button aria-label="Record"><span className="block size-[7px] rounded-full bg-[#a80808]" /></button>
        <button aria-label="Play"><Play size={7} fill="#20d030" color="#20d030" /></button>
        <button aria-label="Pause"><Pause size={8} fill="#f0e020" color="#f0e020" /></button>
        <button aria-label="Stop playback"><span className="block size-[6px] bg-white" /></button>
        <button aria-label="Back"><Rewind size={9} fill="#2090e8" color="#2090e8" /></button>
        <button aria-label="Forward"><FastForward size={9} fill="#2090e8" color="#2090e8" /></button>
        <button aria-label="Loop">
          <svg viewBox="0 0 15 8" className="h-2 w-[15px]" fill="none" stroke="#f0e020" strokeWidth="1.600">
            <circle cx="4" cy="4" r="2.600" />
            <circle cx="11" cy="4" r="2.600" />
            <path d="M6.500 4h2" />
          </svg>
        </button>
      </div>
      <div className="mt-[32px] grid w-[130px] grid-cols-4 gap-0.5 text-[#8098c8]">
        {['NR', 'NB RF', 'NB IF', 'AFC', 'Mute', 'AGC Fast', 'Notch', 'ANotch'].map(b => (
          <button key={b} className={`h-[11px] leading-none whitespace-nowrap ${b === 'AGC Fast' ? 'bg-[#20a0f0] font-bold text-white' : 'bg-[#052460]'}`}>{b}</button>
        ))}
      </div>
      <div className="mt-[17px] text-[11px] leading-[12px] text-[#20d030]">2020/10/14 5:20:50</div>
      <div className="flex flex-col gap-px font-['Liberation_Mono',monospace] text-[7px] leading-[6px] whitespace-pre text-[#c8d8e8]">
        <div className="flex gap-[3px]"><span className="block h-[6px] w-[66px] border border-t-0 border-[#d0d0d0]"><span className="block h-full w-px bg-[#20d030]" /></span>CPU HDSDR: 1%</div>
        <div className="flex gap-[3px]"><span className="block h-[6px] w-[66px] border border-[#d0d0d0]"><span className="block h-full w-[7px] bg-[#f0f020]" /></span>CPU Total: 11%</div>
      </div>
    </div>
  )
}

function DisplayControls({ rbw, avg, values }: { rbw: string; avg: string; values: number[] }) {
  return (
    <div className="grid h-[18px] shrink-0 grid-cols-[48px_50px_33px_1fr] items-center gap-x-0.5 pl-0.5 text-[7px] leading-[8px]">
      <DarkSlider value={values[0]} label="Waterfall low" className="w-full" />
      <DarkSlider value={values[1]} label="Waterfall high" className="w-full" />
      <span className="text-[#f01818]">Waterfall</span>
      <div className="flex items-center">
        <button aria-label="Narrower" className="flex h-[7px] w-3 items-center justify-center bg-white text-[5px] text-black">◂</button>
        <button aria-label="Wider" className="ml-px flex h-[7px] w-3 items-center justify-center bg-white text-[5px] text-black">▸</button>
        <span className="ml-[5px] w-[53px] whitespace-pre text-[#b8d4f0]">{rbw}</span>
        <div className="relative h-[9px] w-[30px] bg-[#e8e8e8] text-black">
          <select aria-label="Averaging" className="block h-full w-full appearance-none pl-0.5 text-[7px] leading-none outline-none"><option>{avg}</option></select>
          <ChevronDown size={7} className="pointer-events-none absolute top-px right-px" />
        </div>
        <span className="ml-[3px] text-[#f01818]">Avg</span>
      </div>
      <DarkSlider value={values[2]} label="Spectrum low" className="w-full" />
      <DarkSlider value={values[3]} label="Spectrum high" className="w-full" />
      <span className="text-[#18d8d8]">Spectrum</span>
      <div className="flex items-center">
        <DarkSlider value={values[4]} label="Zoom" className="w-[45px]" />
        <span className="ml-[3px] w-[21px] text-[#a8c4e0]">Zoom</span>
        <DarkSlider value={values[5]} label="Speed" className="w-[44px]" />
        <span className="ml-[3px] text-[#18d8d8]">Speed</span>
      </div>
    </div>
  )
}

function AfScale() {
  return (
    <svg viewBox="0 0 284 12" preserveAspectRatio="none" className="block h-full w-full">
      <rect width="284" height="12" fill="#02021c" />
      <rect x="0.500" y="0.500" width="283" height="11" fill="none" stroke="#c0c4d8" />
      {Array.from({ length: 32 }, (_, i) => (
        <rect key={i} x={Math.round(2 + i * 8.56)} y="1" width="1" height={i % 5 === 0 ? 3 : 2} fill="#d0d4e8" />
      ))}
      {[500, 1000, 1500, 2000, 2500, 3000].map((f, i) => (
        <text key={f} x={46 + i * 42.7} y="10" textAnchor="middle" fontSize="6" fontFamily="Noto Sans, sans-serif" fill="#e8e8f8">{f}</text>
      ))}
    </svg>
  )
}

function AfSpectrum() {
  return (
    <svg viewBox="0 0 284 72" preserveAspectRatio="none" className="block h-full w-full">
      <defs>
        <linearGradient id="af" x1="0" y1="45" x2="0" y2="72" gradientUnits="userSpaceOnUse">
          <stop offset="0" stopColor="#075040" />
          <stop offset="1" stopColor="#00088a" />
        </linearGradient>
      </defs>
      <rect width="284" height="72" fill="#02022c" />
      <polygon points={AF_TRACE} fill="url(#af)" />
      {['0.00', '-25', '-50', '-75', '-100', '-125', '-150'].map((l, i) => (
        <g key={l}>
          <rect x="14" y={Math.round(i * 11.4)} width="270" height="1" fill="#4a4a5a" opacity="0.6" />
          <text x={i === 0 ? 6 : 1} y={i * 11 + 4} fontSize="6" fontFamily="Noto Sans, sans-serif" fill="#c8ccdc">{l}</text>
        </g>
      ))}
      <polyline points={AF_TRACE} fill="none" stroke="#98a8a8" strokeWidth="0.7" />
      <path d="M18 0L16 24L15 52L13 56L14 62L12 72M263 0L265 24L266 52L268 58L267 66L271 72" fill="none" stroke="#e01818" />
      <text x="281" y="6" textAnchor="end" fontSize="6" fontFamily="Noto Sans, sans-serif" fill="#20c040">AF &lt; -25 dBFS</text>
    </svg>
  )
}

function HdsdrWindow() {
  return (
    <section className="flex min-h-0 min-w-0 flex-1 flex-col border-x border-[#4878a8] bg-black">
      <header className="flex h-4 shrink-0 items-center bg-white pr-2 pl-[3px] text-[#888]">
        <svg viewBox="0 0 10 8" className="mr-[3px] h-2 w-[10px] shrink-0">
          <rect width="10" height="8" fill="#8890b0" />
          <rect width="10" height="5" y="1" fill="#101850" />
          <path d="M1 4h8" stroke="#d8d840" strokeDasharray="1 1" />
        </svg>
        <h2 className="min-w-0 flex-1 overflow-hidden whitespace-pre">{'HDSDR  [default]  v2.80  |  ExtIO_SDRplay_RSP1.dll@16bit  |  SRate: 250000 > 12000  |  OS: 10.0.18363  |  CPU: Intel Xeon          W3670  @ 3.20GHz  |  RAM: 24573MB'}</h2>
        <WindowButtons />
      </header>
      <div className="relative min-h-0 flex-1">
        <Waterfall width={553} height={212} seed={7} pixel={bandPixel} label="RF waterfall" />
        <div className="absolute inset-y-0 left-0 flex flex-col justify-between leading-[8px] text-white">
          {STAMPS.map(s => <span key={s} className="bg-[#00002c]/40">5:{s}</span>)}
        </div>
      </div>
      <div className="h-3 shrink-0"><RfScale /></div>
      <div className="h-[114px] shrink-0 border-b border-white"><RfSpectrum /></div>
      <div className="flex h-[195px] shrink-0">
        <SidePanel />
        <TunerPanel />
        <div className="ml-auto flex w-[284px] flex-col">
          <DisplayControls rbw="RBW  30.5 Hz" avg="2" values={[22, 28, 40, 24, 1, 16]} />
          <div className="min-h-0 flex-1 border border-[#b0b4c8]">
            <Waterfall width={282} height={72} seed={9} pixel={afPixel} label="AF waterfall" />
          </div>
          <div className="h-3"><AfScale /></div>
          <div className="h-[72px] border-x border-[#b0b4c8]"><AfSpectrum /></div>
          <div className="mb-px"><DisplayControls rbw="RBW   5.9 Hz" avg="1" values={[22, 36, 9, 9, 14, 16]} /></div>
        </div>
      </div>
    </section>
  )
}

// ---- Taskbar ----

function TaskButton({ label, children, open = false, active = false }: { label: string; children: ReactNode; open?: boolean; active?: boolean }) {
  return (
    <button
      aria-label={label}
      className={`flex h-full w-6 items-center justify-center border-b ${open ? 'border-[#76b9ed]' : 'border-transparent'} ${active ? 'bg-[#3a3d42]' : ''}`}
    >
      {children}
    </button>
  )
}

function Taskbar() {
  return (
    <footer className="flex h-[21px] shrink-0 items-center bg-[#101010] text-white">
      <button aria-label="Start" className="flex h-full w-[26px] items-center justify-center">
        <svg viewBox="0 0 10 10" className="size-[9px]" fill="#fff">
          <path d="M0 1.400L4.500 0.800V4.700H0zM5 0.700L10 0V4.700H5zM0 5.200H4.500V9.200L0 8.600zM5 5.200H10V10L5 9.300z" />
        </svg>
      </button>
      <label className="flex h-full w-[183px] items-center gap-[5px] bg-[#f2f2f2] pl-[6px] text-[#222]">
        <Search size={9} strokeWidth={2} className="-scale-x-100" />
        <input aria-label="検索" placeholder="ここに入力して検索" className="min-w-0 flex-1 bg-transparent font-['Noto_Sans_CJK_JP',sans-serif] text-[7px] outline-none placeholder:text-[#222]" />
      </label>
      <div className="ml-px flex h-full items-center gap-[2px]">
        <TaskButton label="Cortana"><span className="size-[9px] rounded-full border-2 border-white" /></TaskButton>
        <TaskButton label="Task view">
          <svg viewBox="0 0 10 10" className="size-[9px]" fill="none" stroke="#fff">
            <path d="M1 0v2h5V0M1 10V8h5v2M0.500 3.500h6v3h-6zM9 0v10" strokeWidth="0.800" />
            <path d="M9 3v3" strokeWidth="2" />
          </svg>
        </TaskButton>
        <TaskButton label="Explorer" open>
          <svg viewBox="0 0 12 10" className="h-[10px] w-3">
            <path d="M0 1h5l1 1h6v8H0z" fill="#f0c040" />
            <path d="M0 4h12v6H0z" fill="#fbe08a" />
            <path d="M3 10V7h6v3H7.500V8.500h-3V10z" fill="#3a90e0" />
          </svg>
        </TaskButton>
        <TaskButton label="Chrome">
          <svg viewBox="0 0 24 24" className="size-3">
            <path d="M12 12L1.600 6A12 12 0 0 1 22.400 6z" fill="#ea4335" />
            <path d="M12 12L22.400 6A12 12 0 0 1 12 24z" fill="#fbbc05" />
            <path d="M12 12V24A12 12 0 0 1 1.600 6z" fill="#34a853" />
            <circle cx="12" cy="12" r="5.500" fill="#fff" />
            <circle cx="12" cy="12" r="4.300" fill="#4285f4" />
          </svg>
        </TaskButton>
        <TaskButton label="Outlook" open>
          <svg viewBox="0 0 14 13" className="h-[13px] w-[14px]">
            <rect x="5" y="2" width="8" height="8" fill="#8cc4f0" />
            <rect y="1" width="8" height="10" fill="#0f6cbd" />
            <circle cx="4" cy="6" r="2" fill="none" stroke="#fff" strokeWidth="1.200" />
            <circle cx="10" cy="9" r="3.500" fill="#e04828" />
            <path d="M8.500 7.500l3 3M11.500 7.500l-3 3" stroke="#fff" />
          </svg>
        </TaskButton>
        <TaskButton label="Settings panel" open>
          <svg viewBox="0 0 12 9" className="h-[9px] w-3">
            <rect width="12" height="9" fill="#48a8e0" />
            <rect x="1" y="1" width="6" height="7" fill="#b8e4fa" />
            <path d="M8 3h3M8 5h3" stroke="#fff" />
            <circle cx="4" cy="4" r="1.500" fill="#2070b0" />
          </svg>
        </TaskButton>
        <TaskButton label="HDSDR" open>
          <svg viewBox="0 0 14 12" className="h-3 w-[14px]">
            <rect width="14" height="12" fill="#0c1450" />
            <rect width="14" height="2" fill="#c0c8d8" />
            <rect y="5" width="14" height="2" fill="#e0e8f0" />
            <rect y="7" width="14" height="5" fill="#28389c" />
            <path d="M2 3.500h10" stroke="#d8c840" strokeDasharray="1 1" />
            <path d="M6 9.500h6" stroke="#c8d0f0" strokeDasharray="2 1" />
          </svg>
        </TaskButton>
        <TaskButton label="WSJT-X" open active><Globe className="size-3" /></TaskButton>
        <TaskButton label="JTAlert" open>
          <svg viewBox="0 0 14 13" className="h-[13px] w-[14px]">
            <path d="M4 3h8v8H6z" fill="#d018a0" />
            <circle cx="4" cy="4" r="3" fill="#e8e0c0" stroke="#a03030" />
            <circle cx="10" cy="5" r="2.500" fill="#901878" />
            <circle cx="10" cy="10" r="2.500" fill="#f0d0d0" stroke="#d02040" />
            <path d="M4 2.500V4h1.500" stroke="#333" fill="none" strokeWidth="0.700" />
          </svg>
        </TaskButton>
      </div>
      <div className="ml-auto flex items-center gap-1 pr-3">
        <button aria-label="Show hidden icons"><ChevronUp size={9} /></button>
        <Monitor size={9} strokeWidth={2} />
        <Volume2 size={9} strokeWidth={2} />
        <span className="text-[10px] leading-none">A</span>
        <div className="ml-0.5 text-center leading-[9px]">
          <div>5:20</div>
          <div>2020/10/14</div>
        </div>
        <button aria-label="Notifications" className="ml-1"><MessageSquare size={10} strokeWidth={2} /></button>
      </div>
    </footer>
  )
}

export default function App() {
  return (
    <div className="flex h-screen flex-col overflow-hidden bg-[#0d5fa8] font-['Noto_Sans',sans-serif] text-[6px] leading-[9px] text-black">
      <main className="grid min-h-0 flex-1 grid-cols-[465fr_4fr_555fr] pt-px">
        <div className="flex min-h-0 min-w-0 flex-col gap-0.5 pb-0.5">
          <WideGraph />
          <MainWindow />
        </div>
        <div className="flex flex-col pt-[138px]">
          <div className="ml-px h-[274px] bg-[#e4ecf2]" />
        </div>
        <div className="flex min-h-0 min-w-0 flex-col pb-1">
          <HdsdrWindow />
        </div>
      </main>
      <Taskbar />
    </div>
  )
}
